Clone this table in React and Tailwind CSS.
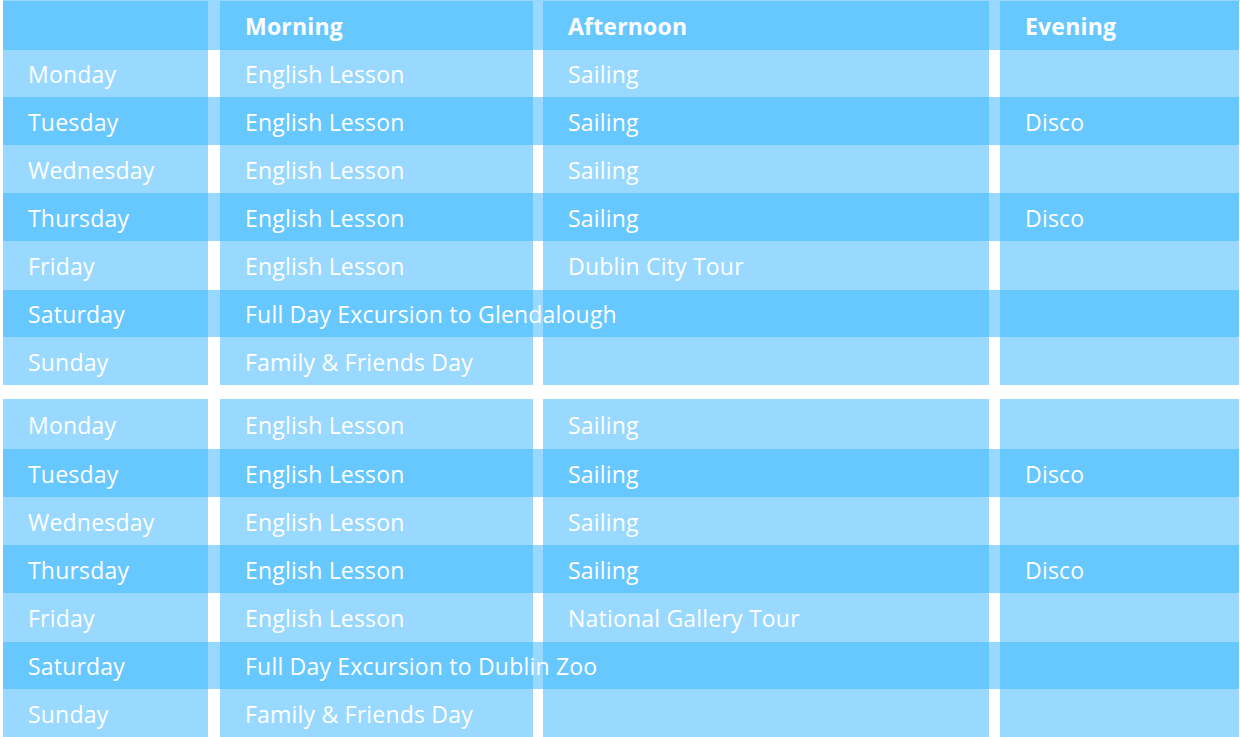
const weeks = [
  [
    ['Monday', 'English Lesson', 'Sailing', ''],
    ['Tuesday', 'English Lesson', 'Sailing', 'Disco'],
    ['Wednesday', 'English Lesson', 'Sailing', ''],
    ['Thursday', 'English Lesson', 'Sailing', 'Disco'],
    ['Friday', 'English Lesson', 'Dublin City Tour', ''],
    ['Saturday', 'Full Day Excursion to Glendalough', '', ''],
    ['Sunday', 'Family & Friends Day', '', ''],
  ],
  [
    ['Monday', 'English Lesson', 'Sailing', ''],
    ['Tuesday', 'English Lesson', 'Sailing', 'Disco'],
    ['Wednesday', 'English Lesson', 'Sailing', ''],
    ['Thursday', 'English Lesson', 'Sailing', 'Disco'],
    ['Friday', 'English Lesson', 'National Gallery Tour', ''],
    ['Saturday', 'Full Day Excursion to Dublin Zoo', '', ''],
    ['Sunday', 'Family & Friends Day', '', ''],
  ],
]

const heights = ['h-[47px]', 'h-[48px]', 'h-[48px]', 'h-[48px]', 'h-[49px]', 'h-[47px]', 'h-[48px]']

function Row({ cells, dark, height, bold }) {
  const cell = dark ? 'bg-[#66c8ff]' : 'bg-[#99d9ff]'
  const gap = dark ? 'bg-[#99d9ff]' : 'bg-white'
  const text = bold ? 'font-bold' : 'font-normal'
  return (
    <div className={`flex ${height} ${text}`}>
      <div className={`w-[205px] ${cell} flex items-center pl-[25px] pt-[2px]`}>{cells[0]}</div>
      <div className={`w-[12px] ${gap}`} />
      <div className={`w-[313px] ${cell} flex items-center pl-[25px] pt-[2px] whitespace-nowrap relative z-10`}>{cells[1]}</div>
      <div className={`w-[10px] ${gap}`} />
      <div className={`w-[446px] ${cell} flex items-center pl-[25px] pt-[2px]`}>{cells[2]}</div>
      <div className={`w-[11px] ${gap}`} />
      <div className={`w-[239px] ${cell} flex items-center pl-[25px] pt-[2px]`}>{cells[3]}</div>
    </div>
  )
}

export default function App() {
  return (
    <div className="w-[1240px] h-[737px] overflow-hidden bg-white pl-[3px] text-white text-[23px] tracking-[0.2px] font-['Open_Sans',sans-serif]">
      <div className="border-t border-[#99d9ff]">
        <Row cells={['', 'Morning', 'Afternoon', 'Evening']} dark height="h-[49px]" bold />
        {weeks[0].map((r, i) => (
          <Row key={i} cells={r} dark={i % 2 === 1} height={heights[i]} />
        ))}
      </div>
      <div className="h-[14px]" />
      {weeks[1].map((r, i) => (
        <Row key={i} cells={r} dark={i % 2 === 1} height={i === 0 ? 'h-[50px]' : heights[i]} />
      ))}
    </div>
  )
}
